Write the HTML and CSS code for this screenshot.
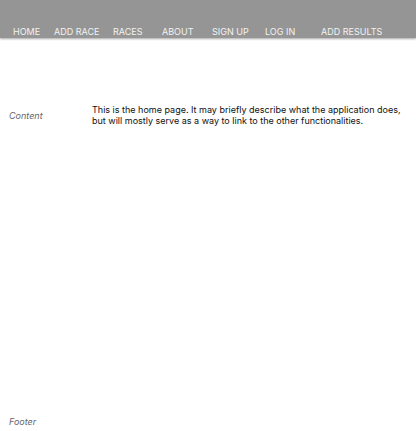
FILE: index.html
```html
<!DOCTYPE html>
<html>
<head>
<meta charset="utf-8">
<link rel="stylesheet" href="styles.css">
</head>
<body>
<div class="page">
  <header class="topbar">
    <nav class="nav">
      <a class="nav-link" href="#">HOME</a>
      <a class="nav-link" href="#">ADD RACE</a>
      <a class="nav-link" href="#">RACES</a>
      <a class="nav-link" href="#">ABOUT</a>
      <a class="nav-link" href="#">SIGN UP</a>
      <a class="nav-link" href="#">LOG IN</a>
      <a class="nav-link" href="#">ADD RESULTS</a>
    </nav>
  </header>
  <main class="main">
    <div class="label">Content</div>
    <p class="intro">This is the home page. It may briefly describe what the application does, but will mostly serve as a way to link to the other functionalities.</p>
  </main>
  <footer class="footer">
    <div class="label">Footer</div>
  </footer>
</div>
</body>
</html>
```

FILE: styles.css
```css
* { box-sizing: border-box; }
html, body { margin: 0; padding: 0; background: #fff; }
body { font-family: Inter, "Liberation Sans", Arial, sans-serif; font-size: 9px; color: #111; }
.page { min-height: 100vh; display: flex; flex-direction: column; }
.topbar {
  height: 38px;
  background: #959595;
  box-shadow: 0 1px 2px rgba(0,0,0,0.35);
  display: flex;
  align-items: flex-end;
  padding: 0 0 0 13px;
}
.nav {
  display: grid;
  grid-template-columns: 41px 59px 49px 50px 53px 56px auto;
  width: 100%;
}
.nav-link {
  color: #f2f2f2;
  text-decoration: none;
  font-size: 9px;
  line-height: 12px;
}
.main {
  display: grid;
  grid-template-columns: 83px 1fr;
  align-items: center;
  padding: 66px 8px 0 9px;
}
.label { font-style: italic; color: #666; font-size: 9px; }
.intro { margin: 0; line-height: 11px; font-size: 9px; color: #111; }
.footer { margin-top: auto; padding: 0 0 4px 9px; }
```
